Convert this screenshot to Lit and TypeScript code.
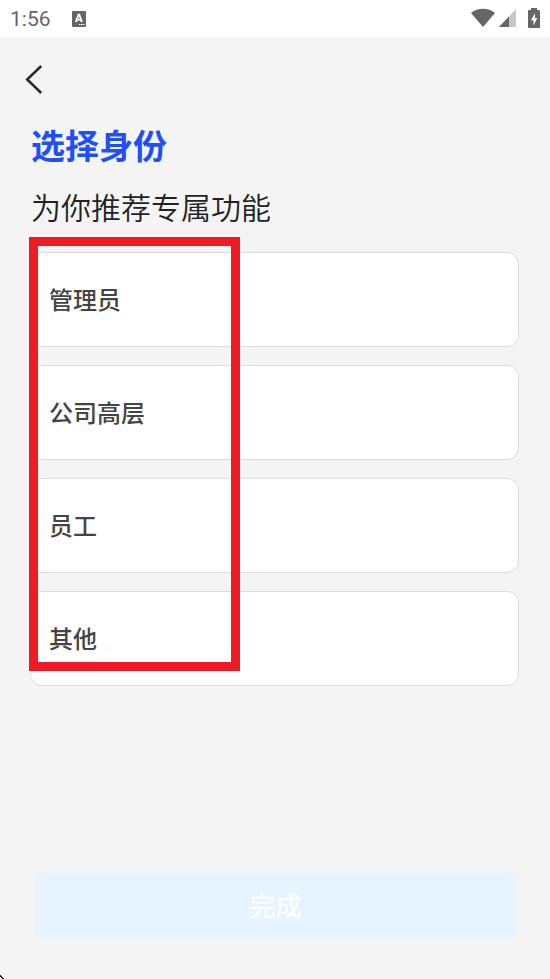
import { LitElement, html, css } from "lit";
import { customElement, state } from "lit/decorators.js";

@customElement("status-bar")
class StatusBar extends LitElement {
  static styles = css`
    :host {
      display: flex;
      align-items: center;
      box-sizing: border-box;
      height: 37px;
      padding: 0 10px 0 10px;
      background: #fff;
      color: #666;
      font: 400 21px/24px Roboto, sans-serif;
    }
    svg {
      display: block;
    }
    .keyboard {
      margin-left: 20px;
    }
    .icons {
      display: flex;
      align-items: center;
      margin-left: auto;
      padding-bottom: 2px;
    }
    .battery {
      margin-left: 12px;
    }
    .signal {
      margin-left: 4px;
    }
  `;

  render() {
    return html`
      <span>1:56</span>
      <svg class="keyboard" width="16" height="16" viewBox="0 0 16 16" aria-hidden="true">
        <rect x="1" y="0" width="14" height="16" rx="1" fill="#666" />
        <path
          d="M4 11 6.8 2.8H9L11.800 11H9.700L9.200 9.500H6.500L6 11ZM7 7.900H8.800L7.900 5.200Z"
          fill="#fff"
          fill-rule="evenodd"
        />
        <path d="M8 13.500H14" stroke="#fff" stroke-dasharray="1.500 .4" />
      </svg>
      <div class="icons">
        <svg width="24" height="20" viewBox="0 0 24 20" aria-hidden="true">
          <path d="M0 5C7-.6 17-.6 24 5L12 19Z" fill="#666" />
        </svg>
        <svg class="signal" width="17" height="18" viewBox="0 0 17 18" aria-hidden="true">
          <path d="M17 0V18H0Z" fill="#c6c6c6" />
          <path d="M10 7.400V18H0Z" fill="#666" />
        </svg>
        <svg class="battery" width="12" height="20" viewBox="0 0 12 20" aria-hidden="true">
          <path d="M3 0H9V2H11Q12 2 12 3V19Q12 20 11 20H1Q0 20 0 19V3Q0 2 1 2H3Z" fill="#666" />
          <path d="M7 5 3 12.200H5.500V17.500L9.300 10H7Z" fill="#fff" />
        </svg>
      </div>
    `;
  }
}

@customElement("app-root")
class AppRoot extends LitElement {
  static styles = css`
    :host {
      position: relative;
      display: flex;
      flex-direction: column;
      min-height: 100vh;
      background: #f4f4f4;
      font-family: "Noto Sans CJK SC", sans-serif;
      overflow: hidden;
    }
    .back {
      align-self: flex-start;
      display: block;
      margin: 24px 0 0 20px;
      padding: 0;
      width: 36px;
      height: 36px;
      border: 0;
      background: none;
    }
    .back svg {
      display: block;
    }
    main {
      padding: 24px 31px 32px 30px;
    }
    header {
      padding: 0 1px;
    }
    h1 {
      margin: 0;
      color: #2050f5;
      font-size: 34px;
      line-height: 48px;
      font-weight: 700;
    }
    .lead {
      margin: 16px 0 24px;
      color: #222;
      font-size: 30px;
      line-height: 43px;
      font-weight: 350;
    }
    .roles {
      position: relative;
      display: flex;
      flex-direction: column;
      gap: 18px;
      margin: 0;
      padding: 0;
      border: 0;
      min-width: 0;
    }
    .role {
      display: flex;
      align-items: center;
      box-sizing: border-box;
      height: 95px;
      padding: 0 18px 2px;
      border: 1px solid #dcdcdc;
      border-radius: 12px;
      background: #fff;
      color: #444;
      font-size: 24px;
      line-height: 36px;
      font-weight: 500;
    }
    .role input {
      appearance: none;
      width: 0;
      height: 0;
      margin: 0;
    }
    .highlight {
      position: absolute;
      inset: -15px auto 15px -1px;
      box-sizing: border-box;
      width: 211px;
      border: 9px solid #ed1c24;
      pointer-events: none;
    }
    .done {
      margin: auto 34px 40px 35px;
      padding: 0 0 2px;
      height: 67px;
      border: 0;
      border-radius: 6px;
      background: #e6f4ff;
      color: #fff;
      font: 500 26px/38px "Noto Sans CJK SC", sans-serif;
    }
    .cursor {
      position: absolute;
      left: 0;
      bottom: 0;
    }
  `;

  @state() private selected = "";

  private roles = ["管理员", "公司高层", "员工", "其他"];

  render() {
    return html`
      <status-bar></status-bar>
      <button class="back" type="button" aria-label="返回">
        <svg width="36" height="36" viewBox="0 0 36 36" fill="none" stroke="#2c2c2c" stroke-width="2.600" aria-hidden="true">
          <path d="M21.200 5 7.200 18.500 21.200 32" />
        </svg>
      </button>
      <main>
        <header>
          <h1 id="title">选择身份</h1>
          <p class="lead">为你推荐专属功能</p>
        </header>
        <fieldset class="roles" aria-labelledby="title">
          ${this.roles.map(
            (role) => html`
              <label class="role">
                <input
                  type="radio"
                  name="role"
                  .value=${role}
                  .checked=${this.selected === role}
                  @change=${() => (this.selected = role)}
                />
                ${role}
              </label>
            `
          )}
          <div class="highlight"></div>
        </fieldset>
      </main>
      <button class="done" type="button" ?disabled=${!this.selected}>完成</button>
      <svg class="cursor" width="4" height="4" viewBox="0 0 4 4" aria-hidden="true">
        <path d="M0 0H1V1H2V2H3V3H4V4H2V3H1V2H0Z" fill="#222" />
      </svg>
    `;
  }
}
